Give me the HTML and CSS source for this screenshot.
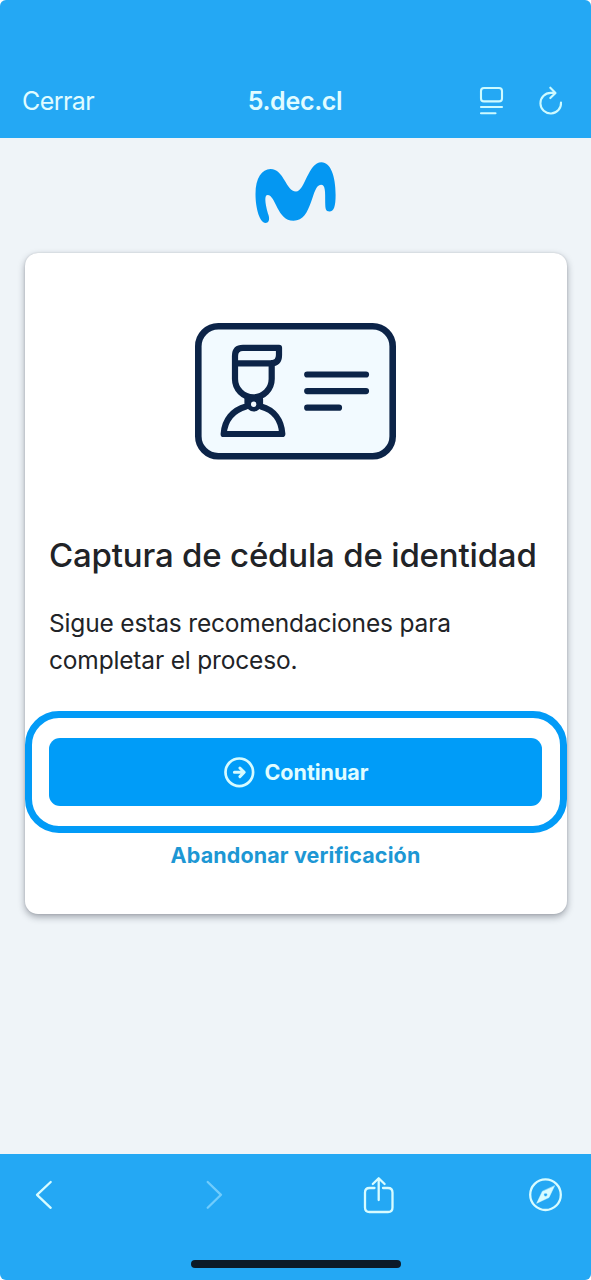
FILE: index.html
```html
<!DOCTYPE html>
<html lang="es">
<head>
<meta charset="utf-8">
<title>Captura de cédula de identidad</title>
<link rel="stylesheet" href="styles.css">
</head>
<body>
<div class="screen">
  <header class="topbar">
    <span class="close">Cerrar</span>
    <span class="address">5.dec.cl</span>
    <div class="actions">
      <svg class="icon-reader" viewBox="478 86 26 30"><rect x="481" y="88" width="21" height="13.4" rx="3"/><path d="M481 107H502M481 113.3H495.5"/></svg>
      <svg class="icon-reload" viewBox="538 86 26 30"><path d="M555.2 92.9H550.7A10.3 10.3 0 1 0 561 102.5M550.3 87.7L555.5 92.9L550.3 98.1"/></svg>
    </div>
  </header>
  <main class="content">
    <svg class="logo" viewBox="255 162 81 62"><path d="M265.5 223C260 223 255.5 209 255.5 194C255.5 178 262 169 270.5 169C284 169 286 191.5 296 191.5C305 191.5 308 162.3 321.5 162.3C330.5 162.3 335.6 176 335.6 195C335.6 206 334 211.5 329.5 211.5C325.5 211.5 325.3 208 325.2 203C325.2 192 325.5 184.8 321 184.8C311 184.8 313 220.8 293.5 220.8C277 220.8 276 195 267.5 195C263.5 195 266 207 268.5 215C270 220 268.5 223 265.5 223Z"/></svg>
    <section class="card">
      <svg class="id-card" viewBox="194 322 203 139">
        <rect class="id-frame" x="198.3" y="326.2" width="194.4" height="130" rx="20"/>
        <path d="M235 363.3V356Q235 347.8 243 347.8H279V355Q279 363.3 271 363.3ZM235 363V379A18.35 18.35 0 0 0 271.7 379V363"/>
        <path d="M246 406.5C233 410 224.5 420 223.7 434H282.3C281.5 420 274 410 261 406.5M247.5 399V406M260 399V406"/>
        <circle class="collar" cx="253.7" cy="404.3" r="5"/>
        <path d="M307.2 374.5H366M307.2 391.1H366M307.2 407.7H339"/>
      </svg>
      <h1 class="title">Captura de cédula de identidad</h1>
      <p class="lead">Sigue estas recomendaciones para<br>completar el proceso.</p>
      <div class="highlight">
        <button class="primary">
          <svg class="icon-arrow" viewBox="224 757 31 31"><circle cx="239.3" cy="772.3" r="13.8"/><path class="arrow" d="M234.4 772.3H243.8M239.9 768L244.2 772.3L239.9 776.6"/></svg>
          <span>Continuar</span>
        </button>
      </div>
      <a class="abandon">Abandonar verificación</a>
    </section>
  </main>
  <footer class="toolbar">
    <nav class="nav">
      <svg class="icon-back" viewBox="34 1178 20 34"><path d="M50.7 1182L37 1194.8L50.7 1207.8"/></svg>
      <svg class="icon-forward" viewBox="204 1178 20 34"><path d="M207.7 1182L221 1194.8L207.7 1207.8"/></svg>
      <svg class="icon-share" viewBox="362 1172 34 44"><path d="M374.5 1187H369.5Q365 1187 365 1191.5V1206.5Q365 1211 369.5 1211H388Q392.5 1211 392.5 1206.5V1191.5Q392.5 1187 388 1187H383M378.7 1199V1177.5M372.8 1183L378.7 1177.2L384.6 1183"/></svg>
      <svg class="icon-compass" viewBox="527 1176 38 38"><circle cx="545.5" cy="1194.7" r="15.3"/><path class="needle" fill-rule="evenodd" d="M554.5 1186L549 1197.5L536.7 1203.3L542.3 1191.5ZM545.6 1192.9A1.8 1.8 0 1 0 545.6 1196.5A1.8 1.8 0 1 0 545.6 1192.9Z"/></svg>
    </nav>
    <div class="home-indicator"></div>
  </footer>
</div>
</body>
</html>
```
FILE: styles.css
```css
* { box-sizing: border-box; }
body { margin: 0; background: #fff; font-family: Inter, "Liberation Sans", sans-serif; }
svg { display: block; fill: none; stroke-linecap: round; stroke-linejoin: round; }

.screen {
  width: 591px; height: 1280px; overflow: hidden;
  display: flex; flex-direction: column;
  background: #eff4f8; border-radius: 6px;
}

.topbar {
  height: 138px; padding: 83px 27px 0 22px; flex: none;
  display: grid; grid-template-columns: 1fr auto 1fr; align-items: center; align-content: start;
  background: #24a8f4; color: #e0fcff; line-height: 30px;
}
.close { font-size: 25px; letter-spacing: -0.55px; padding-top: 2px; }
.address { font-size: 25px; font-weight: 600; letter-spacing: -0.3px; padding: 2px 0 0 3px; margin-right: -1px; }
.actions { display: flex; justify-content: flex-end; gap: 34px; }
.actions svg { width: 26px; height: 30px; stroke: #cdfaff; stroke-width: 2.1; margin-top: 3px; }

.content { flex: 1; padding: 24px 24.5px 0; display: flex; flex-direction: column; align-items: center; }
.logo { width: 81px; height: 62px; fill: #0497f2; }

.card {
  width: 542px; height: 661px; margin-top: 29px; padding: 69px 0 0;
  background: #fff; border-radius: 13px;
  box-shadow: 0 3px 7px rgba(30, 35, 50, .38), 0 0 2px rgba(30, 35, 50, .15);
  display: flex; flex-direction: column; align-items: center;
}
.id-card { width: 203px; height: 139px; stroke: #0c2448; stroke-width: 6.2; }
.id-frame { fill: #f2faff; stroke-width: 6.6; }
.collar { fill: #f2faff; stroke-width: 4.6; }

.title {
  align-self: stretch; margin: 74px 0 0; padding-left: 24.5px;
  font-size: 33px; line-height: 40px; font-weight: 500; letter-spacing: -0.19px;
  color: #212327; white-space: nowrap;
}
.lead {
  align-self: stretch; margin: 30px 0 0; padding-left: 24.5px;
  font-size: 24.5px; line-height: 37px; letter-spacing: -0.17px; color: #212327; white-space: nowrap;
}

.highlight {
  width: 542px; height: 122px; margin-top: 32px; padding: 20px 17.5px;
  border: 7px solid #029bf7; border-radius: 34px; flex: none;
}
.primary {
  width: 493px; height: 68px; padding: 0 0 0 2px; border: 0; border-radius: 11px;
  display: flex; align-items: center; justify-content: center; gap: 9px;
  background: #009cf8; color: #e0fdff;
  font: 700 21.5px/30px Inter, "Liberation Sans", sans-serif;
}
.icon-arrow { width: 31px; height: 31px; stroke: #d5fbff; stroke-width: 2.7; }
.icon-arrow .arrow { stroke-width: 3; }

.abandon { margin-top: 7px; font-size: 21.5px; line-height: 30px; font-weight: 700; letter-spacing: 0.12px; color: #1d97d4; }

.toolbar {
  height: 126px; flex: none; padding-top: 17px;
  display: flex; flex-direction: column; align-items: center; justify-content: space-between;
  background: #24a8f4;
}
.nav {
  width: 100%; padding-left: 34px; height: 48px;
  display: grid; grid-template-columns: 170px 158px 165px 38px; align-items: center;
}
.nav svg { stroke: #d8fcff; stroke-width: 2.3; }
.icon-back, .icon-forward { width: 20px; height: 34px; }
.nav .icon-forward { stroke: #70ccfc; }
.icon-share { width: 34px; height: 44px; }
.icon-compass { width: 38px; height: 38px; }
.nav .needle { fill: #d8fcff; stroke-width: .5; }
.home-indicator { width: 210px; height: 8px; margin-bottom: 12px; border-radius: 4px; background: #0c1a28; }
```
